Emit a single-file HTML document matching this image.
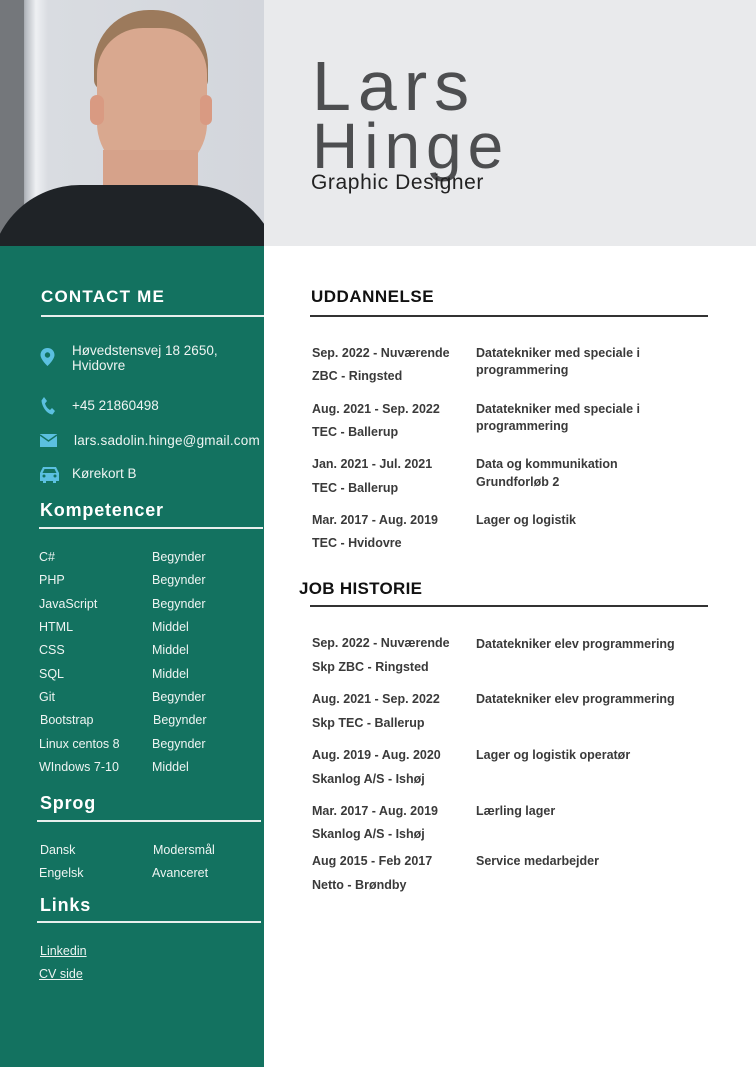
<!DOCTYPE html>
<html><head><meta charset="utf-8"><style>
*{margin:0;padding:0;box-sizing:border-box}
body{width:756px;height:1067px;position:relative;background:#fff;font-family:"Liberation Sans",sans-serif;overflow:hidden}
.a{position:absolute;white-space:nowrap;line-height:16px}
.s{color:#eef4f2;font-size:12.5px}
.r{color:#3a3a3a;font-size:12.5px;font-weight:bold}
.h{color:#fff;font-weight:bold;font-size:18px;letter-spacing:0.8px}
.line{position:absolute;height:2px;background:#e8efed}
.dl{position:absolute;height:2px;background:#333}
</style></head><body>
<div style="position:absolute;left:264px;top:0;width:492px;height:246px;background:#e9eaec"></div>
<div style="position:absolute;left:0;top:0;width:264px;height:246px;background:linear-gradient(90deg,#8a8c90 0,#6e7074 18px,#b8bcc2 26px,#eef0f3 36px,#d9dce1 48px,#d3d6dc 100%);overflow:hidden">
 <div style="position:absolute;left:0;top:0;width:24px;height:246px;background:#74777b"></div>
 <div style="position:absolute;left:94px;top:10px;width:114px;height:80px;border-radius:55px 55px 10px 10px;background:#9c7a5c"></div>
 <div style="position:absolute;left:97px;top:28px;width:110px;height:150px;border-radius:50px 50px 60px 60px;background:#d9a88f"></div>
 <div style="position:absolute;left:90px;top:95px;width:14px;height:30px;border-radius:7px;background:#d99a82"></div>
 <div style="position:absolute;left:200px;top:95px;width:12px;height:30px;border-radius:6px;background:#d99a82"></div>
 <div style="position:absolute;left:103px;top:150px;width:95px;height:60px;background:#d6a28a"></div>
 <div style="position:absolute;left:-10px;top:185px;width:290px;height:120px;border-radius:90px 90px 0 0;background:#1f2327"></div>
</div>
<div class="a" style="left:312px;top:50px;font-size:70px;line-height:72px;color:#4d4e50;letter-spacing:7px">Lars</div>
<div class="a" style="left:312px;top:113px;font-size:64px;line-height:66px;color:#4d4e50;letter-spacing:6px">Hinge</div>
<div class="a" style="left:311px;top:171px;font-size:21px;line-height:24px;color:#222;letter-spacing:0.6px">Graphic Designer</div>
<div style="position:absolute;left:0;top:246px;width:264px;height:821px;background:#137260"></div>
<div class="a h" style="left:41px;top:289px;font-size:17px;letter-spacing:1.2px">CONTACT ME</div>
<div class="line" style="left:41px;top:315px;width:223px"></div>
<svg style="position:absolute;left:40px;top:348px" width="15" height="18" viewBox="0 0 15 18"><path d="M7.5 0C3.5 0 .5 3 .5 7c0 4.5 7 11 7 11s7-6.5 7-11c0-4-3-7-7-7zm0 4.3a2.7 2.7 0 110 5.4 2.7 2.7 0 010-5.4z" fill="#5bc0e0"/></svg>
<div class="a s" style="left:72px;top:343px;font-size:13.5px">Høvedstensvej 18 2650,</div>
<div class="a s" style="left:72px;top:358px;font-size:13.5px">Hvidovre</div>
<svg style="position:absolute;left:41px;top:397px" width="14" height="18" viewBox="0 0 14 18"><path d="M3 0l3 4-2 2.5c1 3 2.5 5 5 6.5l2-2 3 3-2.5 3.5C6 17 1 10 .5 3.5z" fill="#5bc0e0"/></svg>
<div class="a s" style="left:72px;top:398px;font-size:13.5px">+45 21860498</div>
<svg style="position:absolute;left:40px;top:434px" width="17" height="13" viewBox="0 0 17 13"><rect width="17" height="13" fill="#5bc0e0"/><path d="M0 1l8.5 6L17 1" stroke="#137260" stroke-width="1.5" fill="none"/></svg>
<div class="a s" style="left:74px;top:433px;font-size:13.5px;letter-spacing:0.2px">lars.sadolin.hinge@gmail.com</div>
<svg style="position:absolute;left:39px;top:465px" width="21" height="18" viewBox="0 0 21 18"><path d="M4 2h13l3 6v8h-3v2h-3v-2H7v2H4v-2H1V8z" fill="#5bc0e0"/><path d="M5.5 4h10l2 4h-14z" fill="#137260"/><circle cx="5" cy="11" r="1.5" fill="#137260"/><circle cx="16" cy="11" r="1.5" fill="#137260"/></svg>
<div class="a s" style="left:72px;top:466px;font-size:13.5px">Kørekort B</div>
<div class="a h" style="left:40px;top:502px">Kompetencer</div>
<div class="line" style="left:39px;top:527px;width:224px"></div>
<div class="a s" style="left:39px;top:549px">C#</div><div class="a s" style="left:152px;top:549px">Begynder</div>
<div class="a s" style="left:39px;top:572px">PHP</div><div class="a s" style="left:152px;top:572px">Begynder</div>
<div class="a s" style="left:39px;top:596px">JavaScript</div><div class="a s" style="left:152px;top:596px">Begynder</div>
<div class="a s" style="left:39px;top:619px">HTML</div><div class="a s" style="left:152px;top:619px">Middel</div>
<div class="a s" style="left:39px;top:642px">CSS</div><div class="a s" style="left:152px;top:642px">Middel</div>
<div class="a s" style="left:39px;top:666px">SQL</div><div class="a s" style="left:152px;top:666px">Middel</div>
<div class="a s" style="left:39px;top:689px">Git</div><div class="a s" style="left:152px;top:689px">Begynder</div>
<div class="a s" style="left:40px;top:712px">Bootstrap</div><div class="a s" style="left:153px;top:712px">Begynder</div>
<div class="a s" style="left:39px;top:736px">Linux centos 8</div><div class="a s" style="left:152px;top:736px">Begynder</div>
<div class="a s" style="left:39px;top:759px">WIndows 7-10</div><div class="a s" style="left:152px;top:759px">Middel</div>
<div class="a h" style="left:40px;top:795px">Sprog</div>
<div class="line" style="left:37px;top:820px;width:224px"></div>
<div class="a s" style="left:40px;top:842px">Dansk</div><div class="a s" style="left:153px;top:842px">Modersmål</div>
<div class="a s" style="left:39px;top:865px">Engelsk</div><div class="a s" style="left:152px;top:865px">Avanceret</div>
<div class="a h" style="left:40px;top:897px">Links</div>
<div class="line" style="left:37px;top:921px;width:224px"></div>
<div class="a s" style="left:40px;top:943px;text-decoration:underline">Linkedin</div>
<div class="a s" style="left:39px;top:966px;text-decoration:underline">CV side</div>
<div class="a" style="left:311px;top:289px;font-size:17px;font-weight:bold;color:#111;letter-spacing:0.5px">UDDANNELSE</div>
<div class="dl" style="left:310px;top:315px;width:398px"></div>
<div class="a r" style="left:312px;top:345px">Sep. 2022 - Nuværende</div><div class="a r" style="left:312px;top:368px">ZBC - Ringsted</div>
<div class="a r" style="left:476px;top:345px">Datatekniker med speciale i</div><div class="a r" style="left:476px;top:362px">programmering</div>
<div class="a r" style="left:312px;top:401px">Aug. 2021 - Sep. 2022</div><div class="a r" style="left:312px;top:424px">TEC - Ballerup</div>
<div class="a r" style="left:476px;top:401px">Datatekniker med speciale i</div><div class="a r" style="left:476px;top:418px">programmering</div>
<div class="a r" style="left:312px;top:456px">Jan. 2021 - Jul. 2021</div><div class="a r" style="left:312px;top:480px">TEC - Ballerup</div>
<div class="a r" style="left:476px;top:456px">Data og kommunikation</div><div class="a r" style="left:476px;top:474px">Grundforløb 2</div>
<div class="a r" style="left:312px;top:512px">Mar. 2017 - Aug. 2019</div><div class="a r" style="left:312px;top:535px">TEC - Hvidovre</div>
<div class="a r" style="left:476px;top:512px">Lager og logistik</div>
<div class="a" style="left:299px;top:581px;font-size:17px;font-weight:bold;color:#111;letter-spacing:0.3px">JOB HISTORIE</div>
<div class="dl" style="left:310px;top:605px;width:398px"></div>
<div class="a r" style="left:312px;top:635px">Sep. 2022 - Nuværende</div><div class="a r" style="left:312px;top:659px">Skp ZBC - Ringsted</div><div class="a r" style="left:476px;top:636px">Datatekniker elev programmering</div>
<div class="a r" style="left:312px;top:691px">Aug. 2021 - Sep. 2022</div><div class="a r" style="left:312px;top:715px">Skp TEC - Ballerup</div><div class="a r" style="left:476px;top:691px">Datatekniker elev programmering</div>
<div class="a r" style="left:312px;top:747px">Aug. 2019 - Aug. 2020</div><div class="a r" style="left:312px;top:771px">Skanlog A/S - Ishøj</div><div class="a r" style="left:476px;top:747px">Lager og logistik operatør</div>
<div class="a r" style="left:312px;top:803px">Mar. 2017 - Aug. 2019</div><div class="a r" style="left:312px;top:826px">Skanlog A/S - Ishøj</div><div class="a r" style="left:476px;top:803px">Lærling lager</div>
<div class="a r" style="left:312px;top:853px">Aug 2015 - Feb 2017</div><div class="a r" style="left:312px;top:877px">Netto - Brøndby</div><div class="a r" style="left:476px;top:853px">Service medarbejder</div>
</body></html>
